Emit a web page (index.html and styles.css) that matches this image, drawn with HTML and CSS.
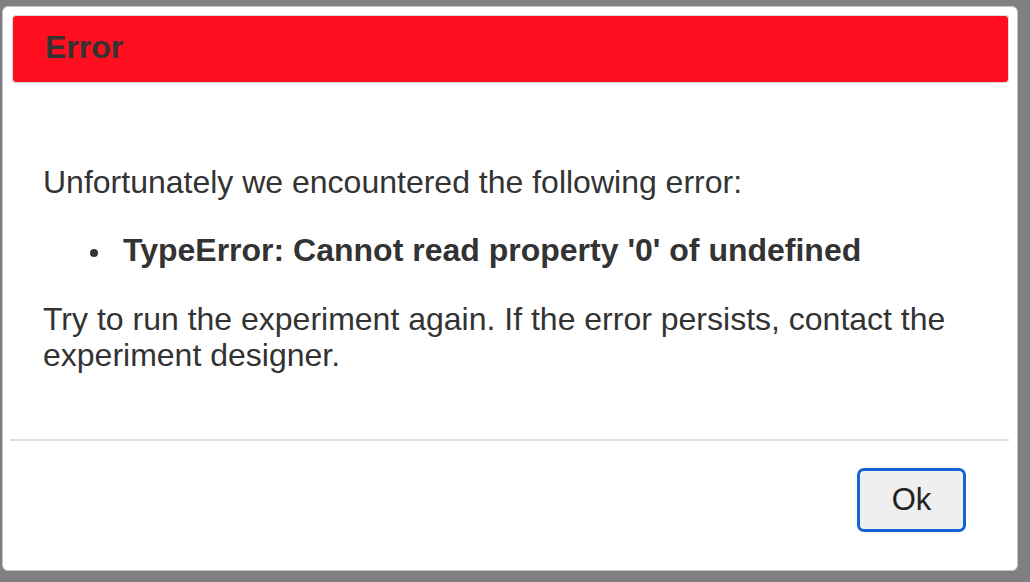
FILE: index.html
```html
<!DOCTYPE html>
<html>
<head>
<meta charset="utf-8">
<link rel="stylesheet" href="styles.css">
</head>
<body>
<div class="dialog">
  <div class="header"><h1 class="title">Error</h1></div>
  <div class="body">
    <p class="text">Unfortunately we encountered the following error:</p>
    <ul class="errors">
      <li class="error-item"><span class="dot"></span><strong>TypeError: Cannot read property '0' of undefined</strong></li>
    </ul>
    <p class="text text-last">Try to run the experiment again. If the error persists, contact the experiment designer.</p>
  </div>
  <div class="divider"></div>
  <div class="footer">
    <button class="ok-btn">Ok</button>
  </div>
</div>
</body>
</html>
```
FILE: styles.css
```css
html, body {
  margin: 0;
  padding: 0;
}
body {
  background: #808080;
  width: 1030px;
  height: 582px;
  overflow: hidden;
  font-family: "Liberation Sans", Arial, sans-serif;
  color: #333;
}
.dialog {
  box-sizing: border-box;
  margin: 6px 0 0 2px;
  width: 1016px;
  height: 565px;
  background: #fff;
  border: 1px solid #c4c4c4;
  border-radius: 6px;
  padding: 8px 8px 0 7px;
  display: flex;
  flex-direction: column;
}
.header {
  margin-left: 2px;
  height: 68px;
  box-sizing: border-box;
  background: #ff0e1f;
  border: 1px solid #dcdcdc;
  border-radius: 4px;
  padding-left: 32px;
}
.title {
  margin: 0;
  font-size: 32px;
  font-weight: bold;
  line-height: 62px;
  color: #333;
}
.body {
  flex: 1;
  padding: 82px 40px 0 33px;
}
.text {
  margin: 0;
  font-size: 32px;
  line-height: 35px;
}
.text-last {
  line-height: 36px;
}
.errors {
  list-style: none;
  margin: 33px 0 33px 0;
  padding: 0 0 0 47px;
}
.error-item {
  display: flex;
  align-items: center;
  font-size: 32px;
  line-height: 35px;
}
.dot {
  flex: none;
  width: 8px;
  height: 8px;
  border-radius: 50%;
  background: #333;
  margin: 4px 25px 0 0;
}
.divider {
  height: 2px;
  background: #dedede;
}
.footer {
  display: flex;
  justify-content: flex-end;
  padding: 27px 43px 38px 0;
}
.ok-btn {
  box-sizing: border-box;
  width: 109px;
  height: 64px;
  background: #efefef;
  border: 3px solid #1464d4;
  border-radius: 7px;
  font-family: "Liberation Sans", Arial, sans-serif;
  font-size: 31px;
  color: #222;
  padding: 0;
}
```
